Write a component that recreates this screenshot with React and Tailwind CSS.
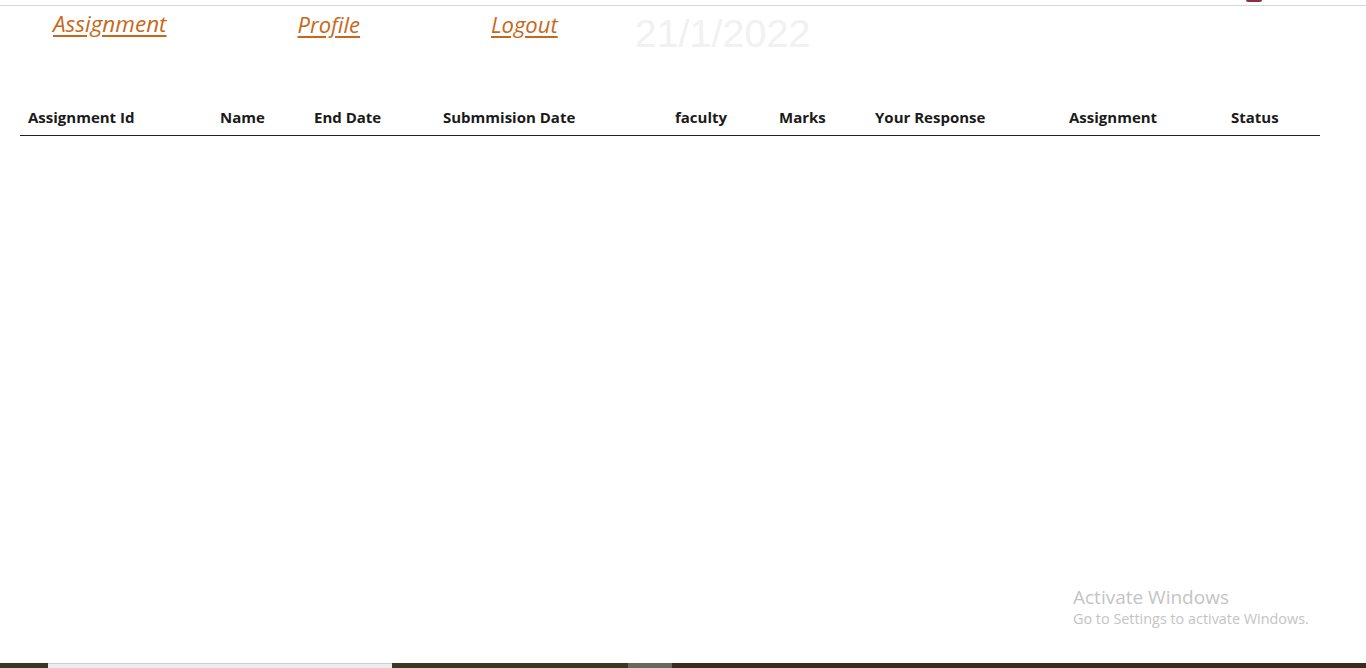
import React from "react";

const cols = [
  "Assignment Id",
  "Name",
  "End Date",
  "Submmision Date",
  "faculty",
  "Marks",
  "Your Response",
  "Assignment",
  "Status",
];

export default function App() {
  return (
    <div className="relative w-[1366px] h-[668px] overflow-hidden bg-white" style={{ fontFamily: '"Open Sans", "Noto Sans", sans-serif' }}>
      {/* top strip */}
      <div className="relative h-[6px] border-b border-[#d6d6d6] bg-white">
        <div className="absolute left-[1246px] top-0 w-[16px] h-[2px] bg-[#8a3040] rounded-b-sm" />
      </div>

      {/* nav */}
      <div className="flex items-start h-[56px]">
        <a href="#" className="ml-[53px] mt-[3px] text-[22.5px] italic text-[#c8671a] underline underline-offset-[3px] leading-[30px]">Assignment</a>
        <a href="#" className="ml-[131px] mt-[3px] text-[22px] italic text-[#c8671a] underline underline-offset-[3px] leading-[30px]">Profile</a>
        <a href="#" className="ml-[131px] mt-[3px] text-[22px] italic text-[#c8671a] underline underline-offset-[3px] leading-[30px]">Logout</a>
        <div className="ml-[77px] mt-[4px] text-[39.5px] leading-[46px] text-[#f1f1f1]" style={{ fontFamily: '"Liberation Sans", Arial, sans-serif' }}>21/1/2022</div>
      </div>

      {/* table */}
      <div className="mt-[41px] ml-[20px] w-[1300px]">
        <div className="grid grid-cols-[192px_94px_129px_232px_104px_96px_194px_162px_97px] border-b border-[#222]">
          {cols.map((c) => (
            <div key={c} className="pl-[8px] pt-[2px] pb-[6px] text-[15px] font-bold text-[#1a1a1a] leading-[24px] whitespace-nowrap">{c}</div>
          ))}
        </div>
      </div>

      {/* activate windows watermark */}
      <div className="absolute left-[1073px] top-[584px] text-[#c4c4c4]" style={{ fontFamily: '"Open Sans", "Noto Sans", sans-serif' }}>
        <div className="text-[19px] leading-[26px]">Activate Windows</div>
        <div className="text-[14.4px] leading-[20px] mt-[-1px]">Go to Settings to activate Windows.</div>
      </div>

      {/* bottom taskbar strip */}
      <div className="absolute left-0 bottom-0 w-full h-[5px] flex">
        <div className="w-[48px] bg-[#3a3222]" />
        <div className="w-[344px] bg-[#ececec] border-t border-[#cfcfcf]" />
        <div className="w-[236px] bg-[#3d3422]" />
        <div className="w-[44px] bg-[#6b665a]" />
        <div className="flex-1 bg-[#3b2a1f]" />
      </div>
    </div>
  );
}
